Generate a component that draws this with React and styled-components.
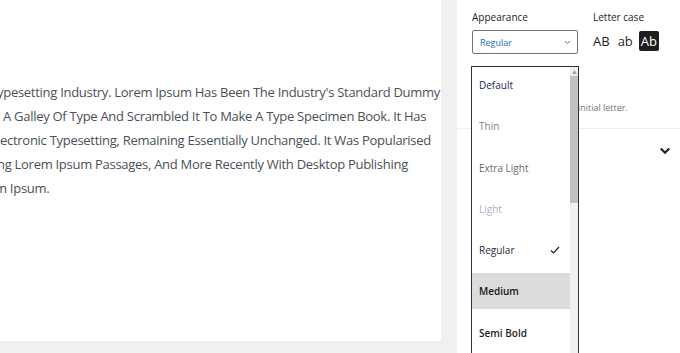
import React from "react";
import styled, { createGlobalStyle } from "styled-components";

const GlobalStyle = createGlobalStyle`
  html, body {
    margin: 0;
    padding: 0;
    background: #f0f0f0;
  }
  * { box-sizing: border-box; }
`;

const Page = styled.div`
  display: flex;
  width: 680px;
  height: 353px;
  background: #f0f0f0;
  font-family: "Open Sans", "Noto Sans", sans-serif;
  overflow: hidden;
`;

const Canvas = styled.main`
  width: 441px;
  height: 341px;
  background: #fff;
  overflow: hidden;
  padding-top: 80px;
`;

const Paragraph = styled.div`
  font-size: 13px;
  letter-spacing: -0.28px;
  line-height: 24px;
  color: #4a5057;
  white-space: nowrap;
`;

const Line = styled.div`
  margin-left: ${(p) => p.$shift}px;
`;

const Sidebar = styled.aside`
  position: relative;
  margin-left: 16px;
  flex: 1;
  height: 353px;
  background: #fff;
  color: #1e1e1e;
`;

const Controls = styled.div`
  display: flex;
  gap: 15px;
  padding: 10px 15px 0 15px;
`;

const Field = styled.div`
  display: flex;
  flex-direction: column;
  width: ${(p) => p.$width || "auto"};
`;

const Label = styled.span`
  font-size: 10px;
  line-height: 14px;
  color: #1e1e1e;
  margin-bottom: 6px;
`;

const SelectBox = styled.div`
  height: 24px;
  border: 1px solid #757575;
  border-radius: 2px;
  display: flex;
  align-items: center;
  justify-content: space-between;
  padding: 0 5px 0 7px;
  font-size: 9px;
  color: #2271b1;
`;

const CaseGroup = styled.div`
  display: flex;
  align-items: center;
  gap: 4px;
  height: 20px;
  margin-top: 1px;
  margin-left: -2px;
`;

const CaseButton = styled.span`
  font-size: 13px;
  line-height: 20px;
  padding: 0 2px;
  border-radius: 2px;
  color: ${(p) => (p.$active ? "#fff" : "#1e1e1e")};
  background: ${(p) => (p.$active ? "#1e1e1e" : "transparent")};
`;

const ToggleRow = styled.div`
  display: flex;
  align-items: center;
  gap: 8px;
  padding: 22px 15px 0 15px;
  font-size: 10px;
`;

const Help = styled.p`
  margin: 11px 0 0 25px;
  font-size: 9px;
  color: #757575;
  line-height: 14px;
  white-space: nowrap;
`;

const Divider = styled.hr`
  border: 0;
  border-top: 1px solid #f0f0f0;
  margin: 13px 0 0 0;
`;

const PanelHeader = styled.div`
  display: flex;
  justify-content: flex-end;
  align-items: center;
  height: 44px;
  padding-right: 8px;
`;

const Dropdown = styled.div`
  position: absolute;
  left: 14px;
  top: 66px;
  width: 108px;
  height: 300px;
  border: 1px solid #333;
  background: #fff;
  display: flex;
`;

const List = styled.ul`
  list-style: none;
  margin: 0;
  padding: 0;
  flex: 1;
  display: flex;
  flex-direction: column;
  gap: 5.3px;
`;

const Item = styled.li`
  height: 36px;
  flex-shrink: 0;
  display: flex;
  align-items: center;
  justify-content: space-between;
  padding: 0 10px 0 7px;
  font-size: 10px;
  font-weight: ${(p) => p.$weight};
  color: ${(p) => p.$color};
  background: ${(p) => (p.$hover ? "#dcdcdc" : "transparent")};
`;

const Scrollbar = styled.div`
  width: 8px;
  background: #f0f0f0;
  display: flex;
  flex-direction: column;
  align-items: center;
`;

const ScrollArrow = styled.div`
  height: 9px;
  display: flex;
  align-items: center;
  justify-content: center;
`;

const Thumb = styled.div`
  width: 8px;
  height: 127px;
  background: #c1c1c1;
`;

const lines = [
  { shift: -3, text: "ypesetting Industry. Lorem Ipsum Has Been The Industry's Standard Dummy" },
  { shift: 3, text: "A Galley Of Type And Scrambled It To Make A Type Specimen Book. It Has" },
  { shift: 0, text: "ectronic Typesetting, Remaining Essentially Unchanged. It Was Popularised" },
  { shift: -3, text: "ng Lorem Ipsum Passages, And More Recently With Desktop Publishing" },
  { shift: -5, text: "m Ipsum." },
];

const weights = [
  { name: "Default", weight: 400, color: "#23285a" },
  { name: "Thin", weight: 400, color: "#8c7a8c" },
  { name: "Extra Light", weight: 400, color: "#6a6a6a" },
  { name: "Light", weight: 400, color: "#a9b1c2" },
  { name: "Regular", weight: 400, color: "#2a2a3a", checked: true },
  { name: "Medium", weight: 560, color: "#141414", hover: true },
  { name: "Semi Bold", weight: 600, color: "#1e1e1e" },
  { name: "Bold", weight: 700, color: "#1e1e1e" },
];

const Chevron = ({ size = 10, color = "#1e1e1e", stroke = 1.5 }) => (
  <svg width={size} height={size} viewBox="0 0 24 24" fill="none">
    <path d="M6 9l6 6 6-6" stroke={color} strokeWidth={stroke * 2.4} strokeLinecap="square" />
  </svg>
);

export default function App() {
  return (
    <>
      <GlobalStyle />
      <Page>
        <Canvas>
          <Paragraph>
            {lines.map((l, i) => (
              <Line key={i} $shift={l.shift}>{l.text}</Line>
            ))}
          </Paragraph>
        </Canvas>
        <Sidebar>
          <Controls>
            <Field $width="106px">
              <Label>Appearance</Label>
              <SelectBox>
                <span>Regular</span>
                <Chevron size={9} color="#2271b1" stroke={1} />
              </SelectBox>
            </Field>
            <Field>
              <Label>Letter case</Label>
              <CaseGroup>
                <CaseButton>AB</CaseButton>
                <CaseButton>ab</CaseButton>
                <CaseButton $active>Ab</CaseButton>
              </CaseGroup>
            </Field>
          </Controls>
          <ToggleRow>Drop cap</ToggleRow>
          <Help>Toggle to show a large initial letter.</Help>
          <Divider />
          <PanelHeader>
            <Chevron size={14} />
          </PanelHeader>
          <Dropdown>
            <List>
              {weights.map((w) => (
                <Item key={w.name} $weight={w.weight} $color={w.color} $hover={w.hover}>
                  <span>{w.name}</span>
                  {w.checked && (
                    <svg width="10" height="10" viewBox="0 0 10 10">
                      <path d="M1 5.5l2.5 2.5L9 2" fill="none" stroke="#1e1e1e" strokeWidth="1.2" />
                    </svg>
                  )}
                </Item>
              ))}
            </List>
            <Scrollbar>
              <ScrollArrow>
                <svg width="5" height="4" viewBox="0 0 5 4">
                  <path d="M2.5 0L5 4H0z" fill="#a3a3a3" />
                </svg>
              </ScrollArrow>
              <Thumb />
            </Scrollbar>
          </Dropdown>
        </Sidebar>
      </Page>
    </>
  );
}
